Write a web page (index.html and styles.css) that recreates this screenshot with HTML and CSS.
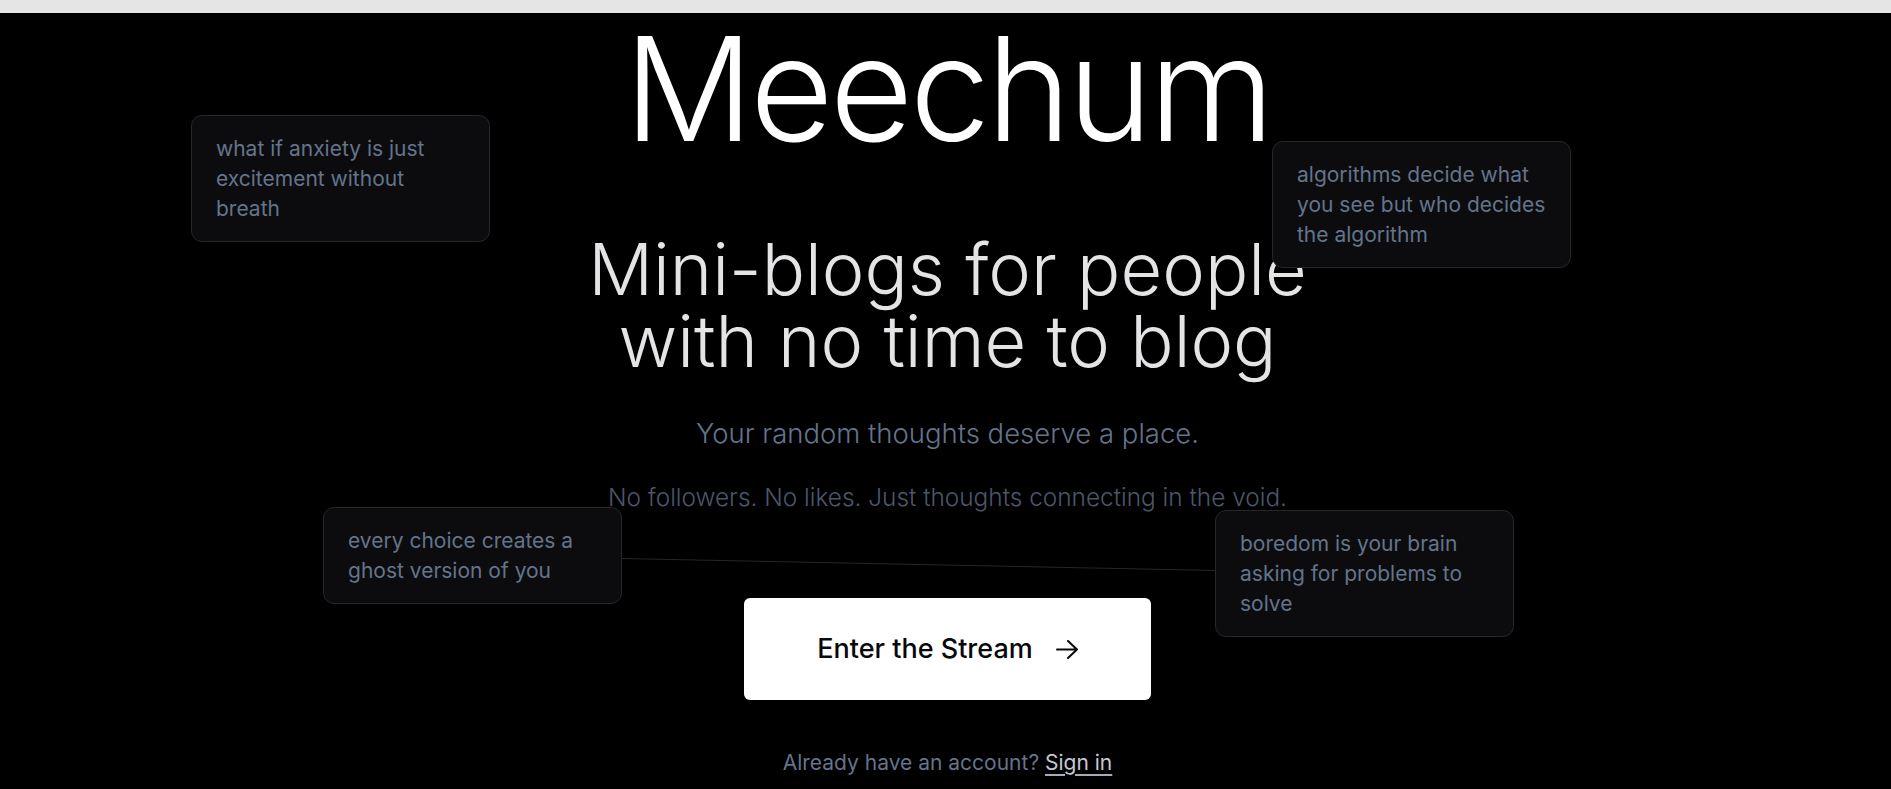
FILE: index.html
```html
<!DOCTYPE html>
<html lang="en">
<head>
<meta charset="utf-8">
<title>Meechum</title>
<link rel="stylesheet" href="styles.css">
</head>
<body>
<div class="topbar"></div>
<div class="stage">
  <svg class="links" width="1891" height="776" viewBox="0 0 1891 776" aria-hidden="true">
    <line x1="472.5" y1="542.5" x2="1364.5" y2="560.5" stroke="#26262b" stroke-width="1"/>
  </svg>

  <main class="hero">
    <h1 class="brand">Meechum</h1>
    <h2 class="headline">Mini-blogs for people<br>with no time to blog</h2>
    <p class="lead">Your random thoughts deserve a place.</p>
    <p class="sub">No followers. No likes. Just thoughts connecting in the void.</p>
    <a class="cta" href="#">
      <span>Enter the Stream</span>
      <svg class="arrow" width="22" height="19" viewBox="0 0 22 19" aria-hidden="true">
        <path d="M1 9.5h20M12 1l9 8.5-9 8.5" fill="none" stroke="#09090b" stroke-width="2" stroke-linecap="round" stroke-linejoin="round"/>
      </svg>
    </a>
    <p class="signin">Already have an account? <a href="#">Sign in</a></p>
  </main>

  <div class="thought t1">what if anxiety is just excitement without breath</div>
  <div class="thought t2">algorithms decide what you see but who decides the algorithm</div>
  <div class="thought t3">every choice creates a ghost version of you</div>
  <div class="thought t4">boredom is your brain asking for problems to solve</div>
</div>
</body>
</html>
```

FILE: styles.css
```css
html, body {
  margin: 0;
  padding: 0;
  background: #000;
}

body {
  height: 789px;
  overflow: hidden;
  font-family: Inter, "Noto Sans", "Liberation Sans", sans-serif;
  -webkit-font-smoothing: antialiased;
}

.topbar {
  height: 13px;
  background: #e5e5e5;
}

.stage {
  position: relative;
  height: 776px;
}

.links {
  position: absolute;
  left: 0;
  top: 0;
  pointer-events: none;
}

.hero {
  position: relative;
  display: flex;
  flex-direction: column;
  align-items: center;
  text-align: center;
  padding-left: 4px;
}

.brand {
  margin: 4px 0 0;
  font-size: 144px;
  line-height: 1;
  font-weight: 300;
  color: #ffffff;
  letter-spacing: -0.025em;
}

.headline {
  margin: 72px 0 0;
  font-size: 72px;
  line-height: 72px;
  font-weight: 300;
  color: #e4e4e7;
}

.lead {
  margin: 38px 0 0;
  font-size: 27.5px;
  line-height: 36px;
  font-weight: 300;
  color: #64748b;
}

.sub {
  margin: 30px 0 0;
  font-size: 24.4px;
  line-height: 32px;
  font-weight: 300;
  color: #4b5769;
}

.cta {
  margin-top: 85px;
  width: 407px;
  height: 102px;
  box-sizing: border-box;
  display: flex;
  align-items: center;
  justify-content: center;
  gap: 23px;
  background: #ffffff;
  border-radius: 6px;
  color: #09090b;
  font-size: 27px;
  line-height: 36px;
  font-weight: 500;
  text-decoration: none;
}

.arrow {
  display: block;
}

.signin {
  margin: 49px 0 0;
  font-size: 21px;
  line-height: 28px;
  color: #64748b;
}

.signin a {
  color: #c7c7d3;
  text-decoration: underline;
  text-decoration-color: #a9a9b8;
  text-decoration-thickness: 2px;
  text-underline-offset: 4px;
}

.thought {
  position: absolute;
  width: 299px;
  box-sizing: border-box;
  padding: 17.5px 24px;
  background: #0c0c0e;
  border: 1px solid #26262b;
  border-radius: 11px;
  color: #64748b;
  font-size: 21px;
  line-height: 30px;
}

.t1 { left: 191px; top: 102px; }
.t2 { left: 1272px; top: 128px; }
.t3 { left: 323px; top: 494px; }
.t4 { left: 1215px; top: 497px; }
```
